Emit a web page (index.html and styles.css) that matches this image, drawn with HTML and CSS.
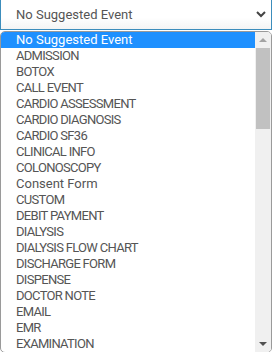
FILE: index.html
```html
<!DOCTYPE html>
<html>
<head>
<meta charset="utf-8">
<link rel="stylesheet" href="styles.css">
</head>
<body>
<div class="select">
  <span class="select-value">No Suggested Event</span>
  <svg class="chevron" width="10" height="7" viewBox="0 0 10 7"><path d="M1 1 L5 5 L9 1" fill="none" stroke="#444" stroke-width="2"/></svg>
</div>
<div class="dropdown">
  <ul class="options">
    <li class="option selected">No Suggested Event</li>
    <li class="option caps">ADMISSION</li>
    <li class="option caps">BOTOX</li>
    <li class="option caps">CALL EVENT</li>
    <li class="option caps">CARDIO ASSESSMENT</li>
    <li class="option caps">CARDIO DIAGNOSIS</li>
    <li class="option caps">CARDIO SF36</li>
    <li class="option caps">CLINICAL INFO</li>
    <li class="option caps">COLONOSCOPY</li>
    <li class="option">Consent Form</li>
    <li class="option caps">CUSTOM</li>
    <li class="option caps">DEBIT PAYMENT</li>
    <li class="option caps">DIALYSIS</li>
    <li class="option caps">DIALYSIS FLOW CHART</li>
    <li class="option caps">DISCHARGE FORM</li>
    <li class="option caps">DISPENSE</li>
    <li class="option caps">DOCTOR NOTE</li>
    <li class="option caps">EMAIL</li>
    <li class="option caps">EMR</li>
    <li class="option caps">EXAMINATION</li>
  </ul>
  <div class="scrollbar">
    <div class="arrow up"></div>
    <div class="track"><div class="thumb"></div></div>
    <div class="arrow down"></div>
  </div>
</div>
</body>
</html>
```
FILE: styles.css
```css
html, body {
  margin: 0;
  padding: 0;
  background: #fff;
  width: 272px;
  height: 352px;
  overflow: hidden;
}
body {
  font-family: Roboto, Lato, sans-serif;
  font-size: 13px;
  color: #555;
}
.select {
  box-sizing: border-box;
  height: 30px;
  border: 1px solid #3c8dbc;
  border-top: none;
  display: flex;
  align-items: center;
  justify-content: space-between;
  padding: 0 5px 0 15px;
  background: linear-gradient(#fff 60%, #f4f4f4);
}
.select-value {
  color: #555;
}
.chevron {
  display: block;
}
.dropdown {
  box-sizing: border-box;
  margin-top: 1px;
  height: 322px;
  border: 1px solid #9a9a9a;
  border-radius: 5px;
  display: flex;
  overflow: hidden;
  background: #fff;
}
.options {
  list-style: none;
  margin: 0;
  padding: 0;
  flex: 1;
}
.option {
  height: 16px;
  line-height: 16px;
  padding-left: 15px;
  white-space: nowrap;
}
.option.caps {
  letter-spacing: -0.7px;
}
.option.selected {
  background: #1e90ff;
  color: #fff;
}
.scrollbar {
  width: 16px;
  background: #f0f0f0;
  display: flex;
  flex-direction: column;
}
.arrow {
  height: 16px;
  position: relative;
}
.arrow::after {
  content: "";
  position: absolute;
  left: 4px;
  width: 0;
  height: 0;
  border-left: 4px solid transparent;
  border-right: 4px solid transparent;
}
.arrow.up::after {
  top: 6px;
  border-bottom: 4px solid #a3a3a3;
}
.arrow.down::after {
  top: 6px;
  border-top: 4px solid #505050;
}
.track {
  flex: 1;
  padding: 0 1px;
}
.thumb {
  height: 81px;
  background: #c1c1c1;
}
```
